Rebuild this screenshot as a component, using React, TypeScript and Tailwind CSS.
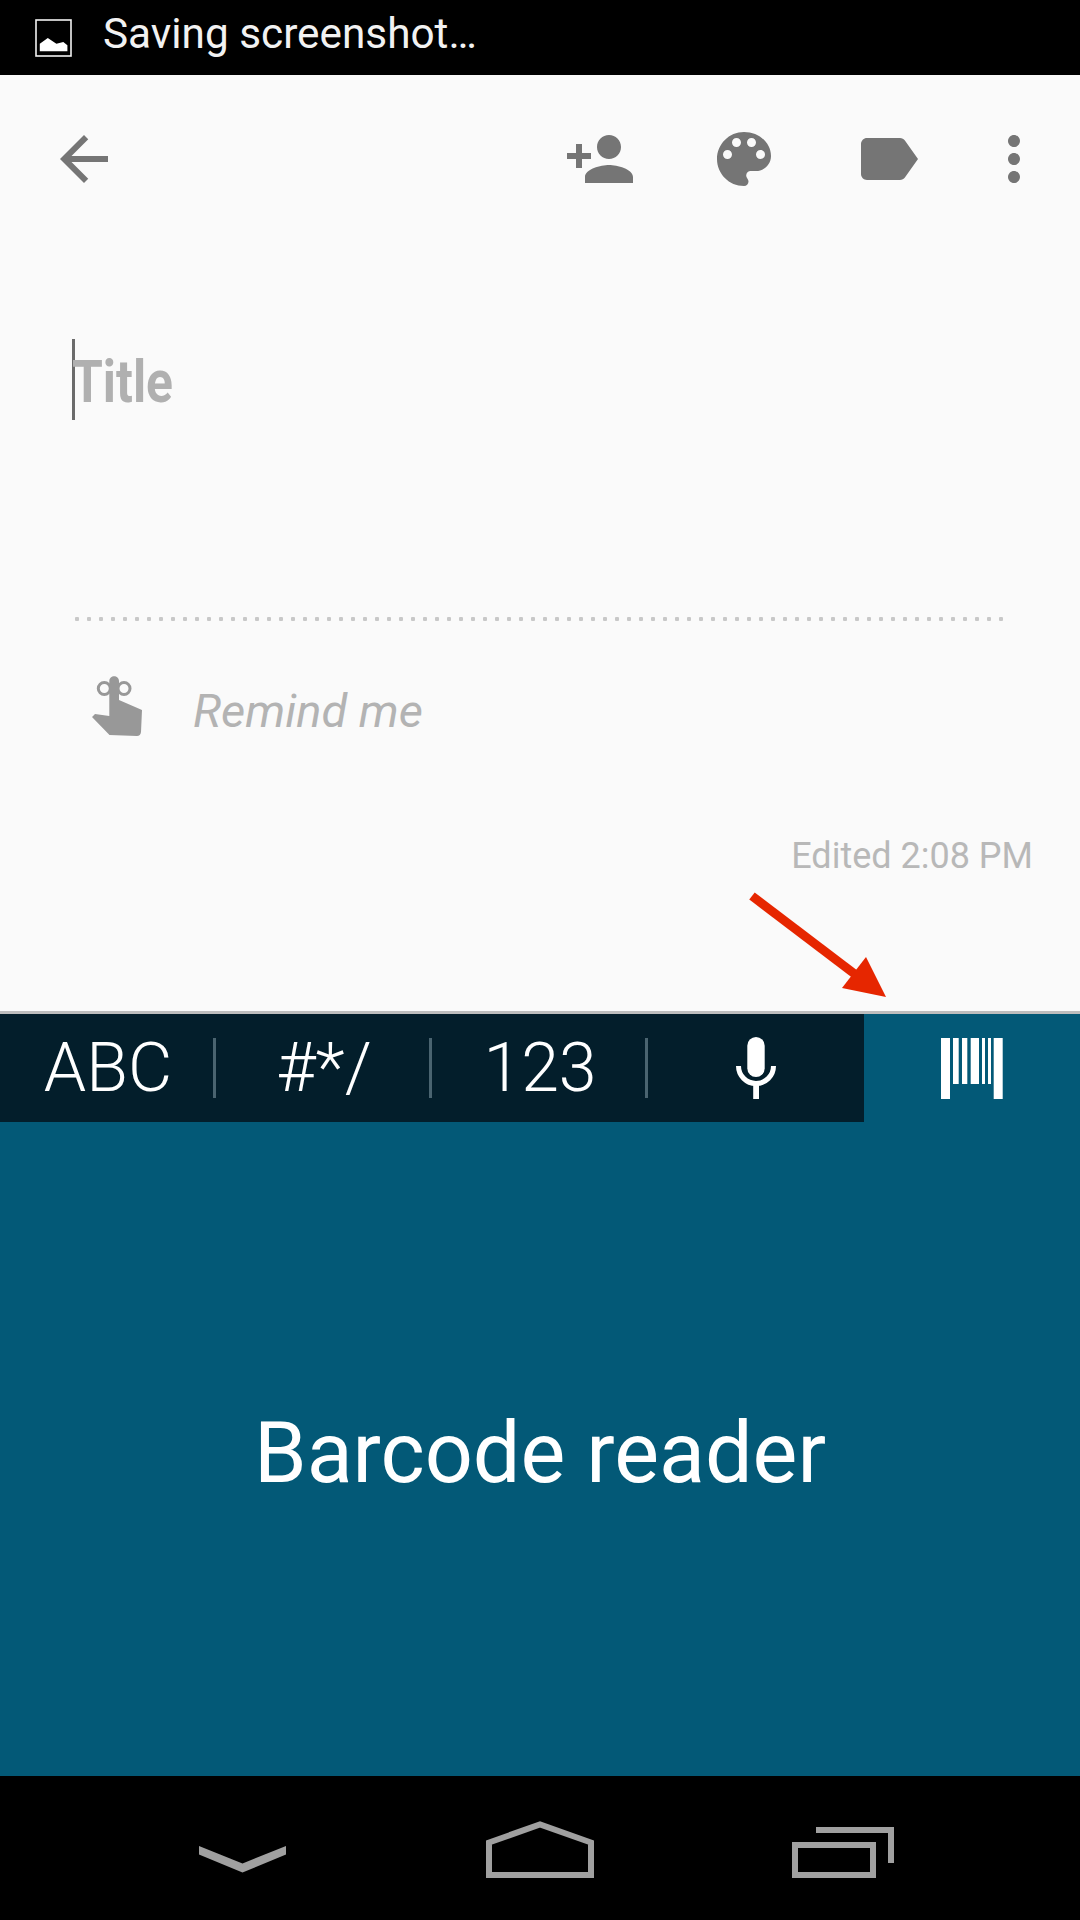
import React from "react";

const roboto = "font-['Roboto',sans-serif]";

function HeaderIcon({ d }: { d: string }) {
  return (
    <svg width="72" height="72" viewBox="0 0 24 24" fill="#757575">
      <path d={d} />
    </svg>
  );
}

function ImageIcon() {
  return (
    <svg width="37" height="38" viewBox="0 0 37 38" className="shrink-0">
      <rect x="1" y="1" width="35" height="36" fill="none" stroke="#f2f2f2" strokeWidth="1.6" />
      <path d="M4.8 32.3V24.7L12.8 19L21.4 24.7L28.3 23L32.4 26.3V32.3Z" fill="#fff" />
    </svg>
  );
}

function HandIcon() {
  return (
    <svg width="50" height="60" viewBox="0 0 50 60" className="shrink-0">
      <circle cx="12.3" cy="12.5" r="6" fill="none" stroke="#989898" strokeWidth="3" />
      <circle cx="32" cy="12.5" r="6" fill="none" stroke="#989898" strokeWidth="3" />
      <path
        d="M17.3 5C17.3 -1.5 27 -1.5 27 5V24L50 34L49 56Q48.5 60 45 60L17.5 59L0 41L3 38L17.3 40Z"
        fill="#989898"
      />
    </svg>
  );
}

function MicIcon() {
  return (
    <svg width="40" height="62" viewBox="0 0 40 62">
      <rect x="11.3" y="0" width="17.4" height="40" rx="8.7" fill="#fff" />
      <path d="M2.5 29A17.5 17.5 0 0 0 37.5 29" fill="none" stroke="#fff" strokeWidth="5" />
      <rect x="17.2" y="46" width="5.8" height="16" fill="#fff" />
    </svg>
  );
}

function BarcodeIcon() {
  return (
    <svg width="62" height="61" viewBox="0 0 62 61" fill="#fff">
      <rect x="0" y="0" width="9" height="61" />
      <rect x="12" y="0" width="5.7" height="46" />
      <rect x="21" y="0" width="5.3" height="46" />
      <rect x="29.7" y="0" width="8.3" height="46" />
      <rect x="41" y="0" width="3" height="46" />
      <rect x="47" y="0" width="3" height="46" />
      <rect x="52.7" y="0" width="9" height="61" />
    </svg>
  );
}

function TextTab({ label }: { label: string }) {
  return (
    <div className="w-[216px] flex items-center">
      <div className={`flex-1 text-center text-white font-light text-[68px] leading-none pl-[3px] ${roboto}`}>{label}</div>
      <div className="w-[3px] h-[60px] bg-[#4a6470]" />
    </div>
  );
}

function NavBar() {
  return (
    <div className="h-[144px] bg-black flex items-start pl-[199px] pt-[45px]">
      <svg width="87" height="27" viewBox="0 0 87 27" className="mt-[25px]">
        <path d="M0 0L43.5 17.5L87 0V8.5L43.5 26.5L0 8.5Z" fill="#a0a0a0" />
      </svg>
      <svg width="108" height="57" viewBox="0 0 108 57" className="ml-[200px]">
        <path d="M3 54V21.5L54 3.5L105 21.5V54Z" fill="none" stroke="#a0a0a0" strokeWidth="6" />
      </svg>
      <svg width="102" height="51" viewBox="0 0 102 51" className="ml-[198px] mt-[6px]">
        <path d="M24 3H99V36" fill="none" stroke="#a0a0a0" strokeWidth="6" />
        <rect x="3" y="18" width="78" height="30" fill="none" stroke="#a0a0a0" strokeWidth="6" />
      </svg>
    </div>
  );
}

export default function App() {
  return (
    <div className={`relative w-[1080px] h-[1920px] flex flex-col overflow-hidden ${roboto}`}>
      {/* status bar */}
      <div className="h-[75px] bg-black flex items-center pl-[35px] gap-[31px]">
        <ImageIcon />
        <span className="text-[#f2f2f2] text-[42.3px] leading-none mb-[7px]">Saving screenshot…</span>
      </div>

      {/* note */}
      <div className="h-[936px] bg-[#fafafa] flex flex-col">
        <div className="flex justify-between pt-[48px] pl-[48px] pr-[30px]">
          <HeaderIcon d="M20 11H7.83l5.59-5.59L12 4l-8 8 8 8 1.41-1.41L7.83 13H20v-2z" />
          <div className="flex gap-[72px]">
            <HeaderIcon d="M15 12c2.21 0 4-1.79 4-4s-1.79-4-4-4-4 1.79-4 4 1.79 4 4 4zm-9-2V7H4v3H1v2h3v3h2v-3h3v-2H6zm9 4c-2.67 0-8 1.34-8 4v2h16v-2c0-2.66-5.33-4-8-4z" />
            <HeaderIcon d="M12 3c-4.97 0-9 4.03-9 9s4.03 9 9 9c.83 0 1.5-.67 1.5-1.5 0-.39-.15-.74-.39-1.01-.23-.26-.38-.61-.38-.99 0-.83.67-1.5 1.5-1.5H16c2.76 0 5-2.24 5-5 0-4.42-4.03-8-9-8zm-5.5 9c-.83 0-1.5-.67-1.5-1.5S5.67 9 6.5 9 8 9.67 8 10.5 7.33 12 6.5 12zm3-4C8.67 8 8 7.33 8 6.5S8.67 5 9.5 5s1.5.67 1.5 1.5S10.33 8 9.5 8zm5 0c-.83 0-1.5-.67-1.5-1.5S13.67 5 14.5 5s1.5.67 1.5 1.5S15.33 8 14.5 8zm3 4c-.83 0-1.5-.67-1.5-1.5S16.67 9 17.5 9s1.5.67 1.5 1.5-.67 1.5-1.5 1.5z" />
            <div className="flex gap-[54px]">
              <HeaderIcon d="M17.63 5.84C17.27 5.33 16.67 5 16 5L5 5.01C3.9 5.01 3 5.9 3 7v10c0 1.1.9 1.99 2 1.99L16 19c.67 0 1.27-.33 1.63-.84L22 12l-4.37-6.16z" />
              <HeaderIcon d="M12 8c1.1 0 2-.9 2-2s-.9-2-2-2-2 .9-2 2 .9 2 2 2zm0 2c-1.1 0-2 .9-2 2s.9 2 2 2 2-.9 2-2-.9-2-2-2zm0 6c-1.1 0-2 .9-2 2s.9 2 2 2 2-.9 2-2-.9-2-2-2z" />
            </div>
          </div>
        </div>

        <div className="flex items-center h-[81px] mt-[144px] pl-[72px]">
          <div className="w-[3px] h-[81px] bg-[#6b6b6b]" />
          <span className="text-[#b0b0b0] font-bold text-[60px] leading-none origin-left scale-x-[0.83] mt-[4px] -ml-[3px]">Title</span>
        </div>

        <div className="h-[4px] mt-[197px] ml-[71px] w-[936px] bg-[radial-gradient(circle,#c8c8c8_2px,transparent_2.5px)] bg-[length:12px_4px]" />

        <div className="flex items-center pl-[92px] mt-[55px] gap-[51px]">
          <HandIcon />
          <span className="text-[#b3b3b3] italic text-[47px] leading-none mt-[8px]">Remind me</span>
        </div>

        <div className="text-right pr-[47px] mt-[102px] text-[#b8b8b8] text-[36px] leading-none">Edited 2:08 PM</div>
      </div>

      <div className="h-[3px] bg-[#bdbdbd]" />

      {/* keyboard */}
      <div className="flex-1 bg-[#035977] flex flex-col">
        <div className="h-[108px] flex">
          <div className="w-[864px] bg-[#031e2b] flex">
            <TextTab label="ABC" />
            <TextTab label="#*/" />
            <TextTab label="123" />
            <div className="w-[216px] flex items-center justify-center">
              <MicIcon />
            </div>
          </div>
          <div className="flex-1 flex items-center justify-center">
            <BarcodeIcon />
          </div>
        </div>
        <div className="flex-1 flex items-center justify-center text-white text-[84.5px] leading-none pt-[10px]">Barcode reader</div>
      </div>

      <NavBar />

      {/* annotation arrow */}
      <svg width="1080" height="1920" viewBox="0 0 1080 1920" className="absolute left-0 top-0 pointer-events-none">
        <path d="M752 896L856 975" stroke="#e62600" strokeWidth="9" fill="none" />
        <path d="M866 957L886 997L842 988Z" fill="#e62600" />
      </svg>
    </div>
  );
}
